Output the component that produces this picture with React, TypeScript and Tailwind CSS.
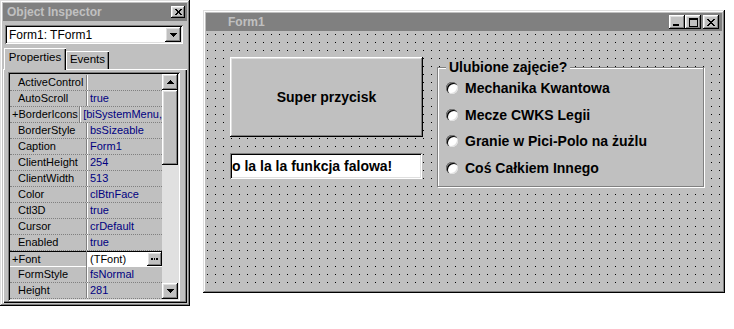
import React from "react";

const frame =
  "shadow-[inset_-1px_-1px_0_#000,inset_1px_1px_0_#dfdfdf,inset_-2px_-2px_0_#808080,inset_2px_2px_0_#fff]";
const raised =
  "shadow-[inset_-1px_-1px_0_#000,inset_1px_1px_0_#fff,inset_-2px_-2px_0_#808080,inset_2px_2px_0_#dfdfdf]";
const sunken =
  "shadow-[inset_1px_1px_0_#808080,inset_-1px_-1px_0_#fff,inset_2px_2px_0_#000,inset_-2px_-2px_0_#dfdfdf]";

function TriDown() {
  return (
    <svg width="7" height="4" viewBox="0 0 7 4" shapeRendering="crispEdges">
      <path d="M0 0h7v1H0z M1 1h5v1H1z M2 2h3v1H2z M3 3h1v1H3z" fill="#000" />
    </svg>
  );
}
function TriUp() {
  return (
    <svg width="7" height="4" viewBox="0 0 7 4" shapeRendering="crispEdges">
      <path d="M3 0h1v1H3z M2 1h3v1H2z M1 2h5v1H1z M0 3h7v1H0z" fill="#000" />
    </svg>
  );
}

const props: { name: string; value: string; plus?: boolean; selected?: boolean }[] = [
  { name: "ActiveControl", value: "" },
  { name: "AutoScroll", value: "true" },
  { name: "BorderIcons", value: "[biSystemMenu,", plus: true },
  { name: "BorderStyle", value: "bsSizeable" },
  { name: "Caption", value: "Form1" },
  { name: "ClientHeight", value: "254" },
  { name: "ClientWidth", value: "513" },
  { name: "Color", value: "clBtnFace" },
  { name: "Ctl3D", value: "true" },
  { name: "Cursor", value: "crDefault" },
  { name: "Enabled", value: "true" },
  { name: "Font", value: "(TFont)", plus: true, selected: true },
  { name: "FormStyle", value: "fsNormal" },
  { name: "Height", value: "281" },
];

function PropRow({ p }: { p: (typeof props)[number] }) {
  if (p.selected) {
    return (
      <div className="h-[16px] flex shadow-[inset_0_1px_0_#000,inset_0_-1px_0_#fff]">
        <div className="w-[77px] border-r border-[#808080] pl-[2px] pt-[1px] leading-[14px] whitespace-nowrap">
          +{p.name}
        </div>
        <div className="flex-1 border-l border-white flex items-center my-[1px] bg-white">
          <span className="pl-[2px] leading-[14px] flex-1 whitespace-nowrap">{p.value}</span>
          <div className={`w-[15px] h-[14px] bg-[#c0c0c0] flex items-center justify-center ${raised}`}>
            <svg width="7" height="2" viewBox="0 0 7 2" shapeRendering="crispEdges">
              <path d="M0 0h2v2H0z M3 0h1v2H3z M5 0h2v2H5z" fill="#000" />
            </svg>
          </div>
        </div>
      </div>
    );
  }
  return (
    <div className="h-[16px] flex border-b border-dotted border-[#808080]">
      <div
        className={`w-[77px] border-r border-[#808080] leading-[15px] whitespace-nowrap ${
          p.plus ? "pl-[2px]" : "pl-[8px]"
        }`}
      >
        {p.plus ? "+" : ""}
        {p.name}
      </div>
      <div className="flex-1 border-l border-white pl-[2px] leading-[15px] text-[#000080] whitespace-nowrap">
        {p.value}
      </div>
    </div>
  );
}

function ObjectInspector() {
  return (
    <div className={`w-[190px] h-[306px] shrink-0 bg-[#c0c0c0] p-[3px] flex flex-col text-[11px] text-black ${frame}`}>
      <div className="h-[18px] bg-[#808080] flex items-center justify-between pl-[4px] pr-[2px]">
        <span className="text-[12px] font-bold text-[#c0c0c0] leading-none">Object Inspector</span>
        <div className={`w-[14px] h-[12px] bg-[#c0c0c0] flex items-center justify-center ${raised}`}>
          <svg width="7" height="6" viewBox="0 0 7 6" shapeRendering="crispEdges">
            <path
              d="M0 0h2v1H0z M5 0h2v1H5z M1 1h2v1H1z M4 1h2v1H4z M2 2h3v1H2z M2 3h3v1H2z M1 4h2v1H1z M4 4h2v1H4z M0 5h2v1H0z M5 5h2v1H5z"
              fill="#000"
            />
          </svg>
        </div>
      </div>

      <div className={`mt-[4px] ml-[2px] w-[178px] h-[19px] bg-white flex items-center justify-between pl-[4px] pr-[2px] text-[12px] ${sunken}`}>
        <span className="leading-none">Form1: TForm1</span>
        <div className={`w-[16px] h-[15px] bg-[#c0c0c0] flex items-center justify-center ${raised}`}>
          <TriDown />
        </div>
      </div>

      <div className="mt-[4px] h-[21px] flex items-end pl-[1px] relative z-10 text-[11.5px]">
        <div className="w-[62px] h-[22px] -mb-[1px] bg-[#c0c0c0] flex items-start justify-center pt-[4px] leading-none shadow-[inset_1px_1px_0_#fff,inset_-1px_0_0_#000,inset_-2px_0_0_#808080]">
          Properties
        </div>
        <div className="w-[43px] h-[18px] bg-[#c0c0c0] flex items-start justify-center pt-[3px] leading-none shadow-[inset_1px_1px_0_#fff,inset_-1px_0_0_#000,inset_-2px_0_0_#808080]">
          Events
        </div>
      </div>

      <div className="flex-1 bg-[#c0c0c0] pt-[3px] pl-[5px] shadow-[inset_1px_1px_0_#fff,inset_-1px_-1px_0_#000,inset_-2px_-2px_0_#808080]">
        <div className={`w-[172px] h-[229px] p-[2px] flex ${sunken}`}>
          <div className="w-[152px] pt-[1px] flex flex-col">
            {props.map((p) => (
              <PropRow key={p.name} p={p} />
            ))}
          </div>
          <div className="w-[16px] flex flex-col">
            <div className={`h-[16px] bg-[#c0c0c0] flex items-center justify-center ${raised}`}>
              <TriUp />
            </div>
            <div className={`h-[75px] bg-[#c0c0c0] ${raised}`} />
            <div className="flex-1 bg-[#e0e0e0]" />
            <div className={`h-[16px] bg-[#c0c0c0] flex items-center justify-center ${raised}`}>
              <TriDown />
            </div>
          </div>
        </div>
      </div>
    </div>
  );
}

function Radio({ label }: { label: string }) {
  return (
    <div className="h-[26.5px] flex items-center gap-[7px]">
      <div className="w-[12px] h-[12px] rounded-full bg-white shadow-[inset_1px_1px_0_#808080,inset_2px_2px_0_#000,inset_-1px_-1px_0_#dfdfdf]" />
      <span className="text-[14px] font-bold leading-none">{label}</span>
    </div>
  );
}

function Form1() {
  return (
    <div className={`ml-[13px] mt-[10px] w-[522px] h-[283px] shrink-0 bg-[#c0c0c0] p-[3px] flex flex-col ${frame}`}>
      <div className="h-[18px] bg-[#808080] flex items-center pl-[22px] pr-[3px]">
        <span className="text-[12px] font-bold text-[#c0c0c0] leading-none">Form1</span>
        <div className="ml-auto flex items-center">
          <div className={`w-[16px] h-[14px] bg-[#c0c0c0] flex items-end pl-[4px] pb-[3px] ${raised}`}>
            <div className="w-[6px] h-[2px] bg-black" />
          </div>
          <div className={`w-[16px] h-[14px] bg-[#c0c0c0] flex items-center justify-center ${raised}`}>
            <div className="w-[9px] h-[9px] border border-black border-t-2" />
          </div>
          <div className={`ml-[2px] w-[16px] h-[14px] bg-[#c0c0c0] flex items-center justify-center ${raised}`}>
            <svg width="8" height="7" viewBox="0 0 8 7" shapeRendering="crispEdges">
              <path
                d="M0 0h2v1H0z M6 0h2v1H6z M1 1h2v1H1z M5 1h2v1H5z M2 2h4v1H2z M3 3h2v1H3z M2 4h4v1H2z M1 5h2v1H1z M5 5h2v1H5z M0 6h2v1H0z M6 6h2v1H6z"
                fill="#000"
              />
            </svg>
          </div>
        </div>
      </div>

      <div className="mt-[1px] flex-1 flex items-start pl-[24px] pt-[25px] bg-black bg-[image:linear-gradient(90deg,transparent_1px,#c0c0c0_1px),linear-gradient(transparent_1px,#c0c0c0_1px)] bg-[size:8px_8px] bg-[position:1px_2px]">
        <div className="w-[193px] flex flex-col">
          <div className={`h-[80px] bg-[#c0c0c0] flex items-center justify-center text-[14px] font-bold ${raised}`}>
            Super przycisk
          </div>
          <div className={`mt-[16px] w-[192px] h-[26px] bg-white flex items-center pl-[2px] text-[14px] font-bold ${sunken}`}>
            o la la la funkcja falowa!
          </div>
        </div>

        <div className="ml-[14px] mt-[10px] w-[267px] h-[120px] relative bg-[#c0c0c0] border border-[#808080] shadow-[1px_1px_0_#fff,inset_1px_1px_0_#fff]">
          <span className="absolute -top-[9px] left-[8px] px-[3px] bg-[#c0c0c0] text-[14px] font-bold leading-[16px]">
            Ulubione zajęcie?
          </span>
          <div className="pt-[7px] pl-[8px] flex flex-col">
            <Radio label="Mechanika Kwantowa" />
            <Radio label="Mecze CWKS Legii" />
            <Radio label="Granie w Pici-Polo na żużlu" />
            <Radio label="Coś Całkiem Innego" />
          </div>
        </div>
      </div>
    </div>
  );
}

export default function App() {
  return (
    <div className="w-[734px] h-[329px] bg-white flex items-start overflow-hidden font-['Liberation_Sans',Arial,sans-serif] text-black">
      <ObjectInspector />
      <Form1 />
    </div>
  );
}
